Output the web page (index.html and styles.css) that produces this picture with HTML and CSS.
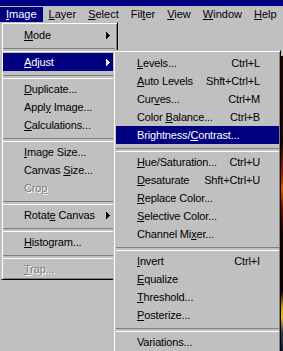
FILE: index.html
```html
<!DOCTYPE html>
<html>
<head>
<meta charset="utf-8">
<title>Image menu</title>
<link rel="stylesheet" href="styles.css">
</head>
<body>
<div class="window">
  <div class="titlebar"></div>
  <div class="menubar">
    <span class="mb-item active"><u>I</u>mage</span>
    <span class="mb-item"><u>L</u>ayer</span>
    <span class="mb-item"><u>S</u>elect</span>
    <span class="mb-item">Fil<u>t</u>er</span>
    <span class="mb-item"><u>V</u>iew</span>
    <span class="mb-item"><u>W</u>indow</span>
    <span class="mb-item"><u>H</u>elp</span>
  </div>
  <div class="workspace">
    <div class="desk"></div>
    <div class="doc-edge"></div>

    <div class="menu menu-main">
      <div class="mi"><span><u>M</u>ode</span><svg class="arrow" width="4" height="7" viewBox="0 0 4 7"><rect x="0" y="0" width="1" height="7"/><rect x="1" y="1" width="1" height="5"/><rect x="2" y="2" width="1" height="3"/><rect x="3" y="3" width="1" height="1"/></svg></div>
      <div class="sep"></div>
      <div class="mi hl"><span><u>A</u>djust</span><svg class="arrow" width="4" height="7" viewBox="0 0 4 7"><rect x="0" y="0" width="1" height="7"/><rect x="1" y="1" width="1" height="5"/><rect x="2" y="2" width="1" height="3"/><rect x="3" y="3" width="1" height="1"/></svg></div>
      <div class="sep"></div>
      <div class="mi"><span><u>D</u>uplicate...</span></div>
      <div class="mi"><span>Appl<u>y</u> Image...</span></div>
      <div class="mi"><span><u>C</u>alculations...</span></div>
      <div class="sep"></div>
      <div class="mi"><span><u>I</u>mage Size...</span></div>
      <div class="mi"><span>Canvas <u>S</u>ize...</span></div>
      <div class="mi dis"><span>Cro<u>p</u></span></div>
      <div class="sep"></div>
      <div class="mi"><span>Rotat<u>e</u> Canvas</span><svg class="arrow" width="4" height="7" viewBox="0 0 4 7"><rect x="0" y="0" width="1" height="7"/><rect x="1" y="1" width="1" height="5"/><rect x="2" y="2" width="1" height="3"/><rect x="3" y="3" width="1" height="1"/></svg></div>
      <div class="sep"></div>
      <div class="mi"><span><u>H</u>istogram...</span></div>
      <div class="sep"></div>
      <div class="mi dis"><span><u>T</u>rap...</span></div>
    </div>

    <div class="menu menu-sub">
      <div class="mi"><span><u>L</u>evels...</span><span class="key">Ctrl+L</span></div>
      <div class="mi"><span><u>A</u>uto Levels</span><span class="key">Shft+Ctrl+L</span></div>
      <div class="mi"><span>Cur<u>v</u>es...</span><span class="key">Ctrl+M</span></div>
      <div class="mi"><span>Color <u>B</u>alance...</span><span class="key">Ctrl+B</span></div>
      <div class="mi hl"><span>Brightness/<u>C</u>ontrast...</span></div>
      <div class="sep"></div>
      <div class="mi"><span><u>H</u>ue/Saturation...</span><span class="key">Ctrl+U</span></div>
      <div class="mi"><span><u>D</u>esaturate</span><span class="key">Shft+Ctrl+U</span></div>
      <div class="mi"><span><u>R</u>eplace Color...</span></div>
      <div class="mi"><span><u>S</u>elective Color...</span></div>
      <div class="mi"><span>Channel Mi<u>x</u>er...</span></div>
      <div class="sep"></div>
      <div class="mi"><span><u>I</u>nvert</span><span class="key">Ctrl+I</span></div>
      <div class="mi"><span><u>E</u>qualize</span></div>
      <div class="mi"><span><u>T</u>hreshold...</span></div>
      <div class="mi"><span><u>P</u>osterize...</span></div>
      <div class="sep"></div>
      <div class="mi"><span>Variations...</span></div>
    </div>
  </div>
</div>
</body>
</html>
```
FILE: styles.css
```css
* {
  box-sizing: border-box;
  margin: 0;
  padding: 0;
}

html, body {
  width: 283px;
  height: 351px;
  overflow: hidden;
  background: #c0c0c0;
}

body {
  font-family: "Liberation Sans", Arial, sans-serif;
  font-size: 11px;
  color: #000;
}

.titlebar {
  height: 6px;
  background: #000080;
}

.menubar {
  height: 16px;
  padding-top: 1px;
  display: flex;
}

.mb-item {
  height: 15px;
  line-height: 15px;
  padding: 0 6px;
  white-space: nowrap;
}

.mb-item.active {
  background: #000080;
  color: #fff;
}

.workspace {
  position: relative;
  height: 329px;
  display: flex;
}

.desk {
  flex: 1;
  background: #c0c0c0;
}

.doc-edge {
  width: 2px;
  background: linear-gradient(to bottom,
    #c0c0c0 0, #c0c0c0 34px,
    #1a0a00 34px, #200800 120px,
    #8a1a00 150px, #e05000 168px, #6a1000 185px,
    #1a0400 210px, #100400 270px,
    #d0a000 285px, #f0c010 295px, #304060 310px, #101828 329px);
}

.menu {
  position: absolute;
  background: #c0c0c0;
  border: 1px solid;
  border-color: #c0c0c0 #000 #000 #c0c0c0;
  box-shadow: inset 1px 1px 0 #fff, inset -1px -1px 0 #808080;
  letter-spacing: -0.15px;
}

.menu-main {
  left: 1px;
  top: 0;
  width: 117px;
  padding: 3px 2px 1px 1px;
}

.menu-sub {
  left: 113px;
  top: 28px;
  width: 168px;
  padding: 3px 1px 3px 2px;
}

.mi {
  display: flex;
  align-items: center;
  height: 18px;
  padding: 0 5px 0 21px;
  white-space: nowrap;
}

.menu-sub .mi {
  padding-right: 19px;
}

.mi.hl {
  background: #000080;
  color: #fff;
}

.mi.dis {
  color: #808080;
  text-shadow: 1px 1px 0 #fff;
}

.key {
  margin-left: auto;
}

.arrow {
  margin-left: auto;
  fill: currentColor;
  display: block;
}

.sep {
  height: 9px;
  padding-top: 4px;
}

.sep::before {
  content: "";
  display: block;
  height: 2px;
  border-top: 1px solid #808080;
  border-bottom: 1px solid #fff;
}
```
